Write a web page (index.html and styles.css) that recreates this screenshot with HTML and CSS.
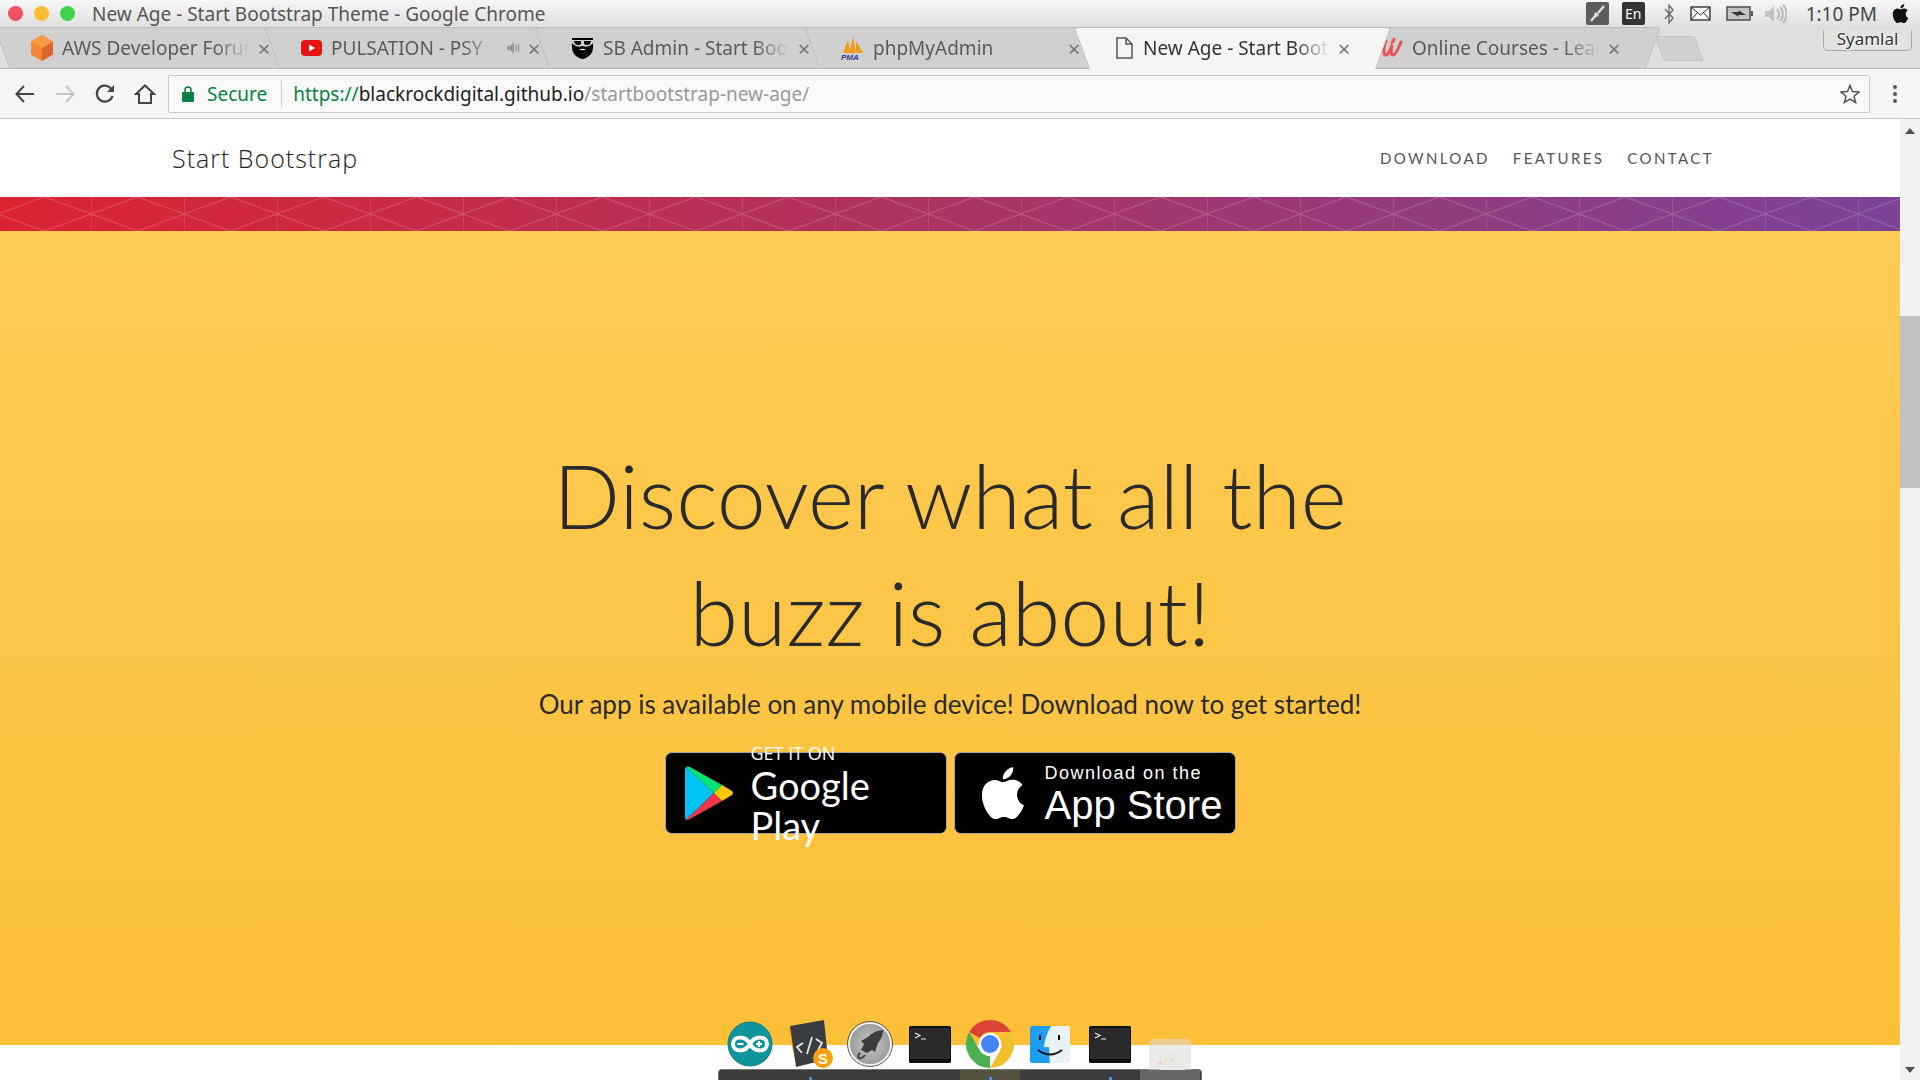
FILE: index.html
```html
<!DOCTYPE html>
<html lang="en">
<head>
    <meta charset="UTF-8">
    <title>New Age - Start Bootstrap Theme</title>
    <link rel="stylesheet" href="styles.css">
</head>

<body>
    <!-- desktop title bar -->
    <div class="titlebar">
        <div class="lights">
            <span class="light light--red"></span>
            <span class="light light--yellow"></span>
            <span class="light light--green"></span>
        </div>
        <span class="window-title">New Age - Start Bootstrap Theme - Google Chrome</span>
        <div class="tray">
            <span class="tray-box tray-box--grey">
                <svg width="23" height="23" viewBox="0 0 23 23"><path d="M5 19 L10 13 M12 11 L18 4" stroke="#ddd" stroke-width="2.5" fill="none"/><path d="M9 11 L12 14" stroke="#ddd" stroke-width="3"/></svg>
            </span>
            <span class="tray-box tray-box--dark">En</span>
            <svg class="tray-bt" width="12" height="22" viewBox="0 0 12 22"><path d="M2 6 L10 15 L6 20 V2 L10 7 L2 16" stroke="#666" stroke-width="1.3" fill="none"/></svg>
            <svg class="tray-mail" width="21" height="15" viewBox="0 0 21 15"><rect x="1" y="1" width="19" height="13" fill="#fafafa" stroke="#333" stroke-width="1.4"/><path d="M1 1 L10.5 9 L20 1 M1 14 L8 6 M20 14 L13 6" stroke="#333" fill="none"/></svg>
            <svg class="tray-batt" width="28" height="15" viewBox="0 0 28 15"><rect x="1" y="1" width="23" height="13" fill="#c4c4c4" stroke="#555" stroke-width="1.6"/><rect x="25" y="5" width="2" height="5" fill="#555"/><path d="M5 6 H13 L12 4 L20 9 H12 L13 11 Z" fill="#333"/></svg>
            <svg class="tray-vol" width="23" height="20" viewBox="0 0 23 20"><path d="M1 7 H5 L10 2 V18 L5 13 H1 Z" fill="#c2c2c2"/><path d="M13 5 A7 7 0 0 1 13 15 M16 3 A10 10 0 0 1 16 17 M19 1 A13 13 0 0 1 19 19" stroke="#bbb" stroke-width="2" fill="none"/></svg>
            <span class="clock">1:10 PM</span>
            <svg class="tray-apple" width="19" height="21" viewBox="3 1 18 22"><path d="M18.71,19.5C17.88,20.74 17,21.95 15.66,21.97C14.32,22 13.89,21.18 12.37,21.18C10.84,21.18 10.37,21.95 9.1,22C7.79,22.05 6.8,20.68 5.96,19.47C4.25,17 2.94,12.45 4.7,9.39C5.57,7.87 7.13,6.91 8.82,6.88C10.1,6.86 11.32,7.75 12.11,7.75C12.89,7.75 14.37,6.68 15.92,6.84C16.57,6.87 18.39,7.1 19.56,8.82C19.47,8.88 17.39,10.1 17.41,12.63C17.44,15.65 20.06,16.66 20.09,16.67C20.06,16.74 19.67,18.11 18.71,19.5M13,3.5C13.73,2.67 14.94,2.04 15.94,2C16.07,3.17 15.6,4.35 14.9,5.19C14.21,6.04 13.07,6.7 11.95,6.61C11.8,5.46 12.36,4.26 13,3.5Z" fill="#111"/></svg>
        </div>
    </div>

    <!-- tabs -->
    <div class="tabstrip">
        <div class="tab">
            <svg class="favicon" width="22" height="26" viewBox="0 0 22 26"><path d="M11 0 L22 6.5 V19.5 L11 26 L0 19.5 V6.5 Z" fill="#f58536"/><path d="M11 13 L22 6.5 V19.5 L11 26 Z" fill="#d9662a"/><path d="M11 0 L22 6.5 L11 13 L0 6.5 Z" fill="#fb9a45"/></svg>
            <span class="tab-title">AWS Developer Forums</span>
            <span class="tab-close">&times;</span>
        </div>
        <div class="tab">
            <svg class="favicon" width="21" height="16" viewBox="0 0 21 16"><rect width="21" height="16" rx="4" fill="#e81414"/><path d="M8 4.5 L14 8 L8 11.5 Z" fill="#fff"/></svg>
            <span class="tab-title">PULSATION - PSY</span>
            <svg class="tab-audio" width="14" height="14" viewBox="0 0 14 14"><path d="M1 5 H4 L8 1 V13 L4 9 H1 Z" fill="#999"/><path d="M10 4 V10 M12.5 3 V11" stroke="#999" stroke-width="1.4"/></svg>
            <span class="tab-close">&times;</span>
        </div>
        <div class="tab">
            <svg class="favicon" width="23" height="22" viewBox="0 0 23 22"><path d="M1 1 H22 L22 3 H1 Z" fill="#000"/><path d="M3 4 H10 L10 7 Q7 9 4 7 Z M13 4 H20 L19 7 Q16 9 13 7 Z" fill="#000"/><path d="M1 6 Q3 9 6 9.500 Q9 10 11.500 9 Q14 10 17 9.500 Q20 9 22 6 Q23 15 18 19 Q14 22 11.500 22 Q9 22 5 19 Q0 15 1 6 Z" fill="#000"/><path d="M8 12.500 Q11.500 11 15 12.500 Q11.500 14 8 12.500 Z" fill="#fff"/></svg>
            <span class="tab-title">SB Admin - Start Bootstrap</span>
            <span class="tab-close">&times;</span>
        </div>
        <div class="tab">
            <svg class="favicon" width="23" height="24" viewBox="0 0 23 24"><path d="M2 17 L7 4 L9 17 Z M8 17 L12 0 L15 17 Z M15 17 L15 5 L22 17 Z" fill="#f49a1a"/><text x="0" y="24" class="pma-text">PMA</text></svg>
            <span class="tab-title">phpMyAdmin</span>
            <span class="tab-close">&times;</span>
        </div>
        <div class="tab tab--active">
            <svg class="favicon favicon--doc" width="17" height="22" viewBox="0 0 17 22"><path d="M1 1 H10 L16 7 V21 H1 Z M10 1 V7 H16" fill="none" stroke="#555" stroke-width="1.5"/></svg>
            <span class="tab-title">New Age - Start Bootstrap</span>
            <span class="tab-close">&times;</span>
        </div>
        <div class="tab">
            <svg class="favicon" width="22" height="22" viewBox="0 0 22 22"><path d="M5 4 Q1 14 4 18 Q7 20 11 8 Q9 18 12 18 Q15 18 20 5 M11 6 Q13 3 13 2" fill="none" stroke="#ec5252" stroke-width="3" stroke-linecap="round"/></svg>
            <span class="tab-title">Online Courses - Learn</span>
            <span class="tab-close">&times;</span>
        </div>
        <div class="newtab"></div>
        <div class="profile">Syamlal</div>
    </div>

    <!-- toolbar -->
    <div class="toolbar">
        <div class="nav-buttons">
            <svg width="22" height="22" viewBox="0 0 22 22"><path d="M20 11 H3 M10 3 L2.500 11 L10 19" fill="none" stroke="#444" stroke-width="2"/></svg>
            <svg width="22" height="22" viewBox="0 0 22 22"><path d="M2 11 H19 M12 3 L19.500 11 L12 19" fill="none" stroke="#c4c4c4" stroke-width="2"/></svg>
            <svg width="22" height="22" viewBox="0 0 22 22"><path d="M18.500 13 A8 8 0 1 1 16.500 5 L19 7.500" fill="none" stroke="#444" stroke-width="2.200"/><path d="M20 2 V9 H13 Z" fill="#444"/></svg>
            <svg width="22" height="22" viewBox="0 0 22 22"><path d="M2 11 L11 2.500 L20 11 H17 V20 H5 V11 Z" fill="none" stroke="#444" stroke-width="2"/></svg>
        </div>
        <div class="omnibox">
            <svg class="lock" width="12" height="16" viewBox="0 0 12 16"><rect y="6" width="12" height="10" rx="1" fill="#0b8043"/><path d="M3 7 V4 A3 3 0 0 1 9 4 V7" fill="none" stroke="#0b8043" stroke-width="1.600"/></svg>
            <span class="secure">Secure</span>
            <span class="omni-divider"></span>
            <span class="url"><span class="url-scheme">https://</span><span class="url-host">blackrockdigital.github.io</span>/startbootstrap-new-age/</span>
            <svg class="star" width="20" height="20" viewBox="0 0 20 20"><path d="M10 1.500 L12.500 7.500 L19 8 L14 12.200 L15.600 18.500 L10 15.100 L4.400 18.500 L6 12.200 L1 8 L7.500 7.500 Z" fill="none" stroke="#555" stroke-width="1.500"/></svg>
        </div>
        <div class="kebab"><span></span><span></span><span></span></div>
    </div>

    <!-- the page -->
    <div class="viewport">
        <div class="page">
            <nav class="navbar">
                <a class="brand">Start Bootstrap</a>
                <div class="nav-links">
                    <a>DOWNLOAD</a>
                    <a>FEATURES</a>
                    <a>CONTACT</a>
                </div>
            </nav>

            <svg class="pattern-bar" width="100%" height="34">
                <defs>
                    <linearGradient id="barGrad">
                        <stop offset="0" stop-color="#dc2430"/>
                        <stop offset="1" stop-color="#7b4397"/>
                    </linearGradient>
                    <pattern id="diamonds" width="93" height="34" patternUnits="userSpaceOnUse" x="-2">
                        <path d="M0 0 V34 M0 17 L46.500 0 L93 17 L46.500 34 Z" fill="none" stroke="#fff" stroke-opacity="0.17" stroke-width="1.300"/>
                    </pattern>
                </defs>
                <rect width="100%" height="34" fill="url(#barGrad)"/>
                <rect width="100%" height="34" fill="url(#diamonds)"/>
            </svg>

            <section class="hero">
                <h1>Discover what all the<br>buzz is about!</h1>
                <p class="hero-sub">Our app is available on any mobile device! Download now to get started!</p>
                <div class="badges">
                    <a class="badge badge--play">
                        <svg width="48" height="54" viewBox="0 0 48 54">
                            <path d="M0 1 L28 27 L0 54 Q-1 53 -1 50 V4 Q-1 2 0 1 Z" fill="#00c3f5"/>
                            <path d="M0 1 Q2 0 4 1 L36 19 L28 27 Z" fill="#00e676"/>
                            <path d="M0 54 L28 27 L36 35 L4 53 Q2 54 0 54 Z" fill="#f0364c"/>
                            <path d="M36 19 L46 25 Q48 27 46 29 L36 35 L28 27 Z" fill="#ffc900"/>
                        </svg>
                        <span class="badge-text">
                            <span class="badge-small">GET IT ON</span>
                            <span class="badge-big">Google Play</span>
                        </span>
                    </a>
                    <a class="badge badge--apple">
                        <svg width="44" height="54" viewBox="3.500 1.800 17 20.300"><path d="M18.71,19.5C17.88,20.74 17,21.95 15.66,21.97C14.32,22 13.89,21.18 12.37,21.18C10.84,21.18 10.37,21.95 9.1,22C7.79,22.05 6.8,20.68 5.96,19.47C4.25,17 2.94,12.45 4.7,9.39C5.57,7.87 7.13,6.91 8.82,6.88C10.1,6.86 11.32,7.75 12.11,7.75C12.89,7.75 14.37,6.68 15.92,6.84C16.57,6.87 18.39,7.1 19.56,8.82C19.47,8.88 17.39,10.1 17.41,12.63C17.44,15.65 20.06,16.66 20.09,16.67C20.06,16.74 19.67,18.11 18.71,19.5M13,3.5C13.73,2.67 14.94,2.04 15.94,2C16.07,3.17 15.6,4.35 14.9,5.19C14.21,6.04 13.07,6.7 11.95,6.61C11.8,5.46 12.36,4.26 13,3.5Z" fill="#fff"/></svg>
                        <span class="badge-text">
                            <span class="badge-small badge-small--apple">Download on the</span>
                            <span class="badge-big badge-big--apple">App Store</span>
                        </span>
                    </a>
                </div>
            </section>

            <div class="page-rest"></div>
        </div>

        <div class="scrollbar">
            <span class="arrow arrow--up"></span>
            <span class="thumb"></span>
            <span class="arrow arrow--down"></span>
        </div>
    </div>

    <!-- dock sits on top of the page -->
    <div class="dock">
        <div class="dock-icons">
            <div class="dock-item">
                <svg width="46" height="46" viewBox="0 0 46 46"><circle cx="23" cy="23" r="22" fill="#0e949c" stroke="#0b7a80"/><path d="M23 23 C18 14 6 15 6 23 C6 31 18 32 23 23 C28 14 40 15 40 23 C40 31 28 32 23 23 Z" fill="none" stroke="#fff" stroke-width="4"/><path d="M10.500 23 H16.500 M29 23 H35 M32 20 V26" stroke="#fff" stroke-width="2.200"/></svg>
            </div>
            <div class="dock-item">
                <svg width="50" height="50" viewBox="0 0 50 50"><path d="M2 9 L30 4 L36 42 L12 47 Z" fill="#f8b51c"/><path d="M5 7 L39 1 L43 40 L11 48 Z" fill="#393c41"/><path d="M18 24 L12 28 L17 34 M31 20 L37 24 L33 31 M27 18 L22 35" fill="none" stroke="#e8e8e8" stroke-width="1.800"/><circle cx="38" cy="39" r="10" fill="#fd9f0c"/><text x="38" y="44.500" class="sublime-s">S</text></svg>
            </div>
            <div class="dock-item">
                <svg width="46" height="46" viewBox="0 0 46 46"><defs><radialGradient id="launchGrad"><stop offset="0" stop-color="#c9c9c9"/><stop offset="1" stop-color="#9a9a9a"/></radialGradient></defs><circle cx="23" cy="23" r="21" fill="url(#launchGrad)" stroke="#f2f2f2" stroke-width="2"/><circle cx="23" cy="23" r="22.500" fill="none" stroke="#555"/><path d="M36 9 Q26 10 21 16 L14 20 L17 23 L14 29 L20 32 L25 29 L28 31 L31 22 Q36 16 36 9 Z" fill="#3d3d3d"/><path d="M13 32 Q10 35 12 37 Q15 38 18 34" fill="none" stroke="#3d3d3d" stroke-width="2"/></svg>
            </div>
            <div class="dock-item">
                <svg width="42" height="37" viewBox="0 0 42 37"><use href="#termIcon"/></svg>
            </div>
            <div class="dock-item">
                <svg width="48" height="48" viewBox="0 0 48 48">
                    <path id="chromeSeg" d="M3.200 12 A24 24 0 0 1 44.800 12 H24 A12 12 0 0 0 13.600 18 Z" fill="#db4437"/>
                    <path d="M3.200 12 A24 24 0 0 1 44.800 12 H24 A12 12 0 0 0 13.600 18 Z" fill="#f0c02c" transform="rotate(120 24 24)"/>
                    <path d="M3.200 12 A24 24 0 0 1 44.800 12 H24 A12 12 0 0 0 13.600 18 Z" fill="#4caf50" transform="rotate(240 24 24)"/>
                    <circle cx="24" cy="24" r="11" fill="#fff"/><circle cx="24" cy="24" r="9" fill="#4285f4"/>
                </svg>
            </div>
            <div class="dock-item">
                <svg width="40" height="37" viewBox="0 0 40 37"><rect width="40" height="37" rx="2" fill="#e9f2f9"/><path d="M2 0 H21 Q15 10 14 21 H19 Q19 30 20 37 H2 Q0 37 0 35 V2 Q0 0 2 0 Z" fill="#1f9df0"/><path d="M10 9 V14 M29 9 V14" stroke="#111" stroke-width="2"/><path d="M8 24 Q20 33 32 24" fill="none" stroke="#111" stroke-width="1.800"/></svg>
            </div>
            <div class="dock-item">
                <svg width="42" height="37" viewBox="0 0 42 37">
                    <g id="termIcon"><rect width="42" height="37" rx="1.500" fill="#111"/><rect x="1" y="2" width="40" height="31" fill="#2a2a2a"/><path d="M6 7 L11 9.500 L6 12 M12 13 H17" fill="none" stroke="#f0f0f0" stroke-width="1.200"/></g>
                </svg>
            </div>
            <div class="dock-item dock-item--ghost">
                <svg width="42" height="42" viewBox="0 0 42 42"><rect width="42" height="42" rx="5" fill="#d8d8d8" fill-opacity="0.55"/><path d="M7 17 L32 9 L38 30 L12 37 Z" fill="#e9e9e9"/><circle cx="11" cy="24" r="1.800" fill="#f4c4c0"/><circle cx="17" cy="22" r="1.800" fill="#f6e4b4"/><circle cx="23" cy="20" r="1.800" fill="#c4ecc0"/></svg>
            </div>
        </div>
        <div class="dock-shelf">
            <span class="shelf-slot"></span>
            <span class="shelf-slot shelf-slot--on"></span>
            <span class="shelf-slot"></span>
            <span class="shelf-slot"></span>
            <span class="shelf-slot shelf-slot--on shelf-slot--current"></span>
            <span class="shelf-slot"></span>
            <span class="shelf-slot shelf-slot--on"></span>
            <span class="shelf-slot shelf-slot--ghost"></span>
        </div>
    </div>
</body>
</html>
```

FILE: styles.css
```css
html, body {
    margin: 0;
    height: 1080px;
    overflow: hidden;
}
body {
    position: relative;
    display: flex;
    flex-direction: column;
    font-family: "Noto Sans", sans-serif;
    background-color: #fff;
}
a {
    display: block;
}

/* title bar */
.titlebar {
    display: flex;
    align-items: center;
    height: 27px;
    padding-left: 8px;
    background: linear-gradient(#f7f7f7, #dfdfdf);
}
.lights {
    display: flex;
    gap: 11px;
}
.light {
    width: 15px;
    height: 15px;
    border-radius: 50%;
}
.light--red { background-color: #f4515e; }
.light--yellow { background-color: #fcbc33; }
.light--green { background-color: #3ed34c; }
.window-title {
    margin-left: 17px;
    font-size: 19px;
    color: #555;
}
.tray {
    display: flex;
    align-items: center;
    margin-left: auto;
    padding-right: 10px;
}
.tray-box {
    display: flex;
    align-items: center;
    justify-content: center;
    width: 23px;
    height: 23px;
    border-radius: 2px;
    color: #fff;
    font-size: 14px;
}
.tray-box--grey { background-color: #5d5d5d; }
.tray-box--dark { background-color: #333; margin-left: 13px; }
.tray-bt { margin-left: 18px; }
.tray-mail { margin-left: 15px; }
.tray-batt { margin-left: 15px; }
.tray-vol { margin-left: 10px; }
.clock {
    margin-left: 19px;
    font-size: 19px;
    color: #444;
}
.tray-apple { margin-left: 14px; }

/* tabs */
.tabstrip {
    position: relative;
    display: flex;
    height: 41px;
    padding-left: 9px;
    background-color: #dfdfdf;
    border-bottom: 1px solid #b4b4b4;
    box-sizing: border-box;
    height: 42px;
}
.tab {
    position: relative;
    display: flex;
    align-items: center;
    flex: none;
    width: 287px;
    height: 41px;
    margin-right: -17px;
    padding: 0 24px 0 22px;
    box-sizing: border-box;
    font-size: 19px;
    color: #5a5a5a;
    isolation: isolate;
}
.tab::before,
.tab::after {
    content: "";
    position: absolute;
    top: 0;
    bottom: 0;
    width: 56%;
    background-color: #d0d0d0;
    border-top: 1px solid #bcbcbc;
    z-index: -1;
}
.tab::before {
    left: 0;
    border-left: 1px solid #b8b8b8;
    border-top-left-radius: 4px;
    transform: skewX(20deg);
    transform-origin: bottom left;
}
.tab::after {
    right: 0;
    border-right: 1px solid #b8b8b8;
    border-top-right-radius: 4px;
    transform: skewX(-20deg);
    transform-origin: bottom right;
}
.tab--active {
    height: 42px;
    color: #333;
    z-index: 2;
}
.tab--active::before,
.tab--active::after {
    background-color: #f5f5f5;
}
.favicon {
    flex: none;
    margin-right: 9px;
}
.favicon--doc {
    margin-left: 5px;
    margin-right: 10px;
}
.pma-text {
    font-family: "Liberation Sans", sans-serif;
    font-size: 8px;
    font-style: italic;
    font-weight: bold;
    fill: #2a3f8f;
}
.tab-title {
    flex: 1;
    overflow: hidden;
    white-space: nowrap;
    -webkit-mask-image: linear-gradient(to left, transparent 0, #000 36px);
    mask-image: linear-gradient(to left, transparent 0, #000 36px);
}
.tab-audio {
    flex: none;
    margin-left: 8px;
}
.tab-close {
    flex: none;
    width: 16px;
    margin-left: 6px;
    text-align: center;
    font-size: 22px;
    color: #777;
}
.newtab {
    flex: none;
    width: 38px;
    height: 23px;
    margin: 9px 0 0 30px;
    background-color: #d0d0d0;
    border: 1px solid #c4c4c4;
    border-radius: 3px;
    transform: skewX(20deg);
}
.profile {
    position: absolute;
    top: 3px;
    right: 8px;
    width: 87px;
    height: 20px;
    line-height: 17px;
    text-align: center;
    font-size: 17px;
    color: #333;
    text-shadow: 0 0 2px #fff, 1px 1px 1px #fff;
    background-color: #e2e2e2;
    border: 1px solid #aaa;
    border-top: none;
    border-radius: 0 0 5px 5px;
}

/* toolbar */
.toolbar {
    display: flex;
    align-items: center;
    height: 50px;
    background-color: #f5f5f5;
    border-bottom: 1px solid #c8c8c8;
    box-sizing: border-box;
}
.nav-buttons {
    display: flex;
    gap: 18px;
    width: 168px;
    padding-left: 14px;
    box-sizing: border-box;
}
.omnibox {
    display: flex;
    align-items: center;
    width: 1702px;
    height: 38px;
    background-color: #f9f9f9;
    border: 1px solid #c9c9c9;
    border-radius: 2px;
    box-sizing: border-box;
    font-size: 19px;
    color: #9a9a9a;
}
.lock { margin-left: 13px; }
.secure {
    margin-left: 13px;
    color: #0b8043;
}
.omni-divider {
    width: 1px;
    height: 26px;
    margin: 0 11px 0 14px;
    background-color: #ccc;
}
.url-scheme { color: #0b8043; }
.url-host { color: #222; }
.star {
    margin-left: auto;
    margin-right: 9px;
}
.kebab {
    display: flex;
    flex-direction: column;
    align-items: center;
    gap: 3px;
    width: 50px;
}
.kebab span {
    width: 4px;
    height: 4px;
    border-radius: 50%;
    background-color: #555;
}

/* page */
.viewport {
    display: flex;
    flex: 1;
    min-height: 0;
}
.page {
    display: flex;
    flex-direction: column;
    flex: 1;
    min-width: 0;
}
.navbar {
    display: flex;
    align-items: center;
    justify-content: space-between;
    flex: none;
    height: 78px;
    padding: 0 186px 0 172px;
    background-color: #fff;
}
.brand {
    font-family: "Open Sans", sans-serif;
    font-size: 25px;
    font-weight: 300;
    letter-spacing: 1px;
    color: #222;
}
.nav-links {
    display: flex;
    gap: 23px;
}
.nav-links a {
    font-family: "Lato", sans-serif;
    font-size: 15px;
    letter-spacing: 2.4px;
    color: #555;
}
.pattern-bar {
    display: block;
    flex: none;
}
.hero {
    display: flex;
    flex-direction: column;
    align-items: center;
    flex: 1;
    padding-top: 206px;
    box-sizing: border-box;
    background: linear-gradient(#fecb54, #fdc038);
    color: #2a2a2a;
}
.hero h1 {
    margin: 0;
    font-family: "Lato", sans-serif;
    font-size: 88px;
    font-weight: 300;
    line-height: 117px;
    text-align: center;
}
.hero-sub {
    margin: 15px 0 0;
    font-family: "Lato", sans-serif;
    font-size: 26px;
    line-height: 36px;
}
.badges {
    display: flex;
    gap: 7px;
    margin-top: 30px;
}
.badge {
    display: flex;
    align-items: center;
    width: 282px;
    height: 82px;
    box-sizing: border-box;
    background-color: #000;
    border: 1px solid #a6a6a6;
    border-radius: 7px;
    color: #fff;
}
.badge--play svg {
    margin-left: 20px;
    margin-right: 17px;
    overflow: visible;
}
.badge--apple svg {
    margin-left: 26px;
    margin-right: 20px;
}
.badge-text {
    display: flex;
    flex-direction: column;
}
.badge-small {
    font-family: "Open Sans", sans-serif;
    font-size: 18px;
    line-height: 24px;
}
.badge-big {
    font-family: "Lato", sans-serif;
    font-size: 38px;
    line-height: 40px;
}
.badge-small--apple {
    font-family: "Liberation Sans", sans-serif;
    letter-spacing: 1.5px;
}
.badge-big--apple {
    font-family: "Liberation Sans", sans-serif;
    font-size: 40px;
}
.page-rest {
    flex: none;
    height: 35px;
    background-color: #fff;
}

/* scrollbar */
.scrollbar {
    display: flex;
    flex-direction: column;
    align-items: center;
    flex: none;
    width: 20px;
    padding: 9px 0 7px;
    box-sizing: border-box;
    background-color: #f1f1f1;
}
.thumb {
    width: 20px;
    height: 172px;
    margin-top: 182px;
    background-color: #c1c1c1;
}
.arrow {
    width: 0;
    height: 0;
    border-left: 5px solid transparent;
    border-right: 5px solid transparent;
}
.arrow--up { border-bottom: 6px solid #505050; }
.arrow--down {
    border-top: 6px solid #505050;
    margin-top: auto;
}

/* dock */
.dock {
    position: absolute;
    left: 718px;
    bottom: 0;
    width: 484px;
}
.dock-icons {
    display: flex;
    padding: 0 2px;
}
.dock-item {
    display: flex;
    align-items: center;
    justify-content: center;
    width: 60px;
    height: 50px;
}
.dock-item svg {
    overflow: visible;
}
.dock-item--ghost svg {
    margin-top: 32px;
}
.sublime-s {
    font-family: "Liberation Sans", sans-serif;
    font-size: 15px;
    font-weight: bold;
    text-anchor: middle;
    fill: #fff;
}
.dock-shelf {
    display: flex;
    height: 11px;
    padding: 0 1px;
    box-sizing: border-box;
    background-color: #3c3c3c;
    border: 1px solid #777;
    border-bottom: none;
    border-radius: 4px 4px 0 0;
}
.shelf-slot {
    position: relative;
    width: 60px;
}
.shelf-slot--on::after {
    content: "";
    position: absolute;
    left: 29px;
    bottom: 0;
    width: 3px;
    height: 3px;
    background-color: #4a90e2;
}
.shelf-slot--current { background-color: #55523f; }
.shelf-slot--ghost { background-color: #666; }
```
